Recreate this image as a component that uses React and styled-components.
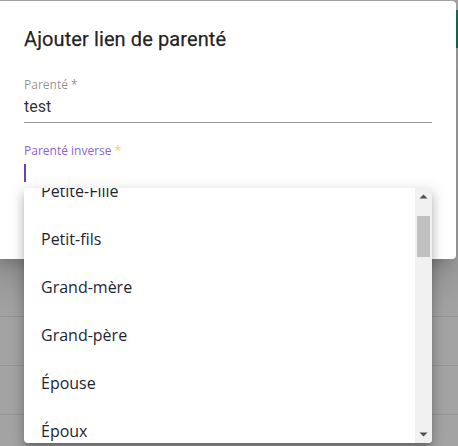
import React, { useLayoutEffect, useRef } from "react";
import styled, { createGlobalStyle } from "styled-components";

const Global = createGlobalStyle`
  html, body { margin: 0; padding: 0; }
  body {
    background: #a2a2a2;
    overflow: hidden;
    font-family: Roboto, "Liberation Sans", sans-serif;
  }
`;

const Page = styled.div`
  position: relative;
  width: 458px;
  height: 446px;
  overflow: hidden;
  background: #a3a3a3;
`;

const Backdrop = styled.div`
  display: flex;
  flex-direction: column;
  padding-top: 268px;
`;

const BgRow = styled.div`
  height: 48px;
  border-bottom: 1px solid #959595;
`;

const SideStrip = styled.div`
  position: absolute;
  right: 0;
  top: 10px;
  width: 3px;
  height: 38px;
  background: #156c55;
`;

const Dialog = styled.div`
  position: absolute;
  left: -10px;
  top: 1px;
  width: 466px;
  height: 258px;
  box-sizing: border-box;
  background: #fff;
  border-radius: 4px;
  box-shadow: 0 11px 15px -7px rgba(0,0,0,0.2), 0 24px 38px 3px rgba(0,0,0,0.14);
  padding: 22px 24px 0 34px;
`;

const Title = styled.h2`
  margin: 0;
  font-family: Roboto, "Liberation Sans", sans-serif;
  font-size: 20px;
  font-weight: 400;
  line-height: 32px;
  color: rgba(0, 0, 0, 0.87);
  letter-spacing: 0.1px;
  -webkit-text-stroke: 0.25px rgba(0, 0, 0, 0.87);
`;

const Form = styled.div`
  display: flex;
  flex-direction: column;
  gap: 21px;
  margin-top: 23px;
  width: 408px;
`;

const Field = styled.div`
  display: flex;
  flex-direction: column;
`;

const Label = styled.label`
  font-family: "Open Sans", "Noto Sans", sans-serif;
  font-size: 12px;
  line-height: 14px;
  color: ${(p) => (p.$focused ? "#8b63d4" : "rgba(0,0,0,0.45)")};
`;

const Star = styled.span`
  color: ${(p) => (p.$focused ? "#f7cf3c" : "inherit")};
`;

const InputLine = styled.div`
  height: 20px;
  padding: 5px 0 5px;
  display: flex;
  align-items: center;
  font-family: Roboto, "Liberation Sans", sans-serif;
  font-size: 16px;
  line-height: 20px;
  color: rgba(0, 0, 0, 0.82);
  border-bottom: ${(p) => (p.$focused ? "2px solid #6a40bd" : "1px solid #949494")};
`;

const Caret = styled.span`
  display: inline-block;
  width: 2px;
  height: 18px;
  background: #6a40bd;
`;

const Dropdown = styled.div`
  position: absolute;
  left: 24px;
  top: 188px;
  width: 408px;
  height: 255px;
  display: flex;
  background: #fff;
  border-radius: 0 0 4px 4px;
  box-shadow: 0 5px 5px -3px rgba(0,0,0,0.2), 0 8px 10px 1px rgba(0,0,0,0.14), 0 3px 14px 2px rgba(0,0,0,0.12);
  overflow: hidden;
`;

const List = styled.ul`
  flex: 1;
  margin: 0;
  padding: 8px 0;
  list-style: none;
  overflow: hidden;
`;

const Option = styled.li`
  height: 48px;
  display: flex;
  align-items: center;
  padding: 0 17px;
  font-family: "Open Sans", "Noto Sans", sans-serif;
  font-size: 16px;
  color: #1f2433;
`;

const Scrollbar = styled.div`
  width: 17px;
  display: flex;
  flex-direction: column;
  background: #f1f1f1;
`;

const Arrow = styled.div`
  height: 17px;
  display: flex;
  align-items: center;
  justify-content: center;
`;

const Track = styled.div`
  flex: 1;
  display: flex;
  flex-direction: column;
  padding: 11px 2px 0;
`;

const Thumb = styled.div`
  height: 41px;
  background: #c1c1c1;
`;

const Tri = ({ up }) => (
  <svg width="9" height="5" viewBox="0 0 9 5">
    <polygon points={up ? "0.5,4.5 4.5,0.5 8.5,4.5" : "0.5,0.5 4.5,4.5 8.5,0.5"} fill="#505050" />
  </svg>
);

const options = [
  "Père",
  "Mère",
  "Fils",
  "Fille",
  "Frère",
  "Sœur",
  "Petite-Fille",
  "Petit-fils",
  "Grand-mère",
  "Grand-père",
  "Épouse",
  "Époux",
  "Oncle",
  "Tante",
  "Neveu",
  "Nièce",
  "Cousin",
  "Cousine",
  "Beau-père",
  "Belle-mère",
  "Beau-frère",
  "Belle-sœur",
  "Gendre",
  "Belle-fille",
  "Tuteur",
  "Tutrice",
  "Autre",
];

export default function App() {
  const listRef = useRef(null);
  useLayoutEffect(() => {
    if (listRef.current) listRef.current.scrollTop = 8 + 48 * 6 + 21;
  }, []);

  return (
    <Page>
      <Global />
      <Backdrop>
        <BgRow />
        <BgRow />
        <BgRow />
        <BgRow />
      </Backdrop>
      <SideStrip />
      <Dialog>
        <Title>Ajouter lien de parenté</Title>
        <Form>
          <Field>
            <Label>
              Parenté <Star>*</Star>
            </Label>
            <InputLine>test</InputLine>
          </Field>
          <Field>
            <Label $focused>
              Parenté inverse <Star $focused>*</Star>
            </Label>
            <InputLine $focused>
              <Caret />
            </InputLine>
          </Field>
        </Form>
      </Dialog>
      <Dropdown>
        <List ref={listRef}>
          {options.map((o) => (
            <Option key={o}>{o}</Option>
          ))}
        </List>
        <Scrollbar>
          <Arrow>
            <Tri up />
          </Arrow>
          <Track>
            <Thumb />
          </Track>
          <Arrow>
            <Tri />
          </Arrow>
        </Scrollbar>
      </Dropdown>
    </Page>
  );
}
